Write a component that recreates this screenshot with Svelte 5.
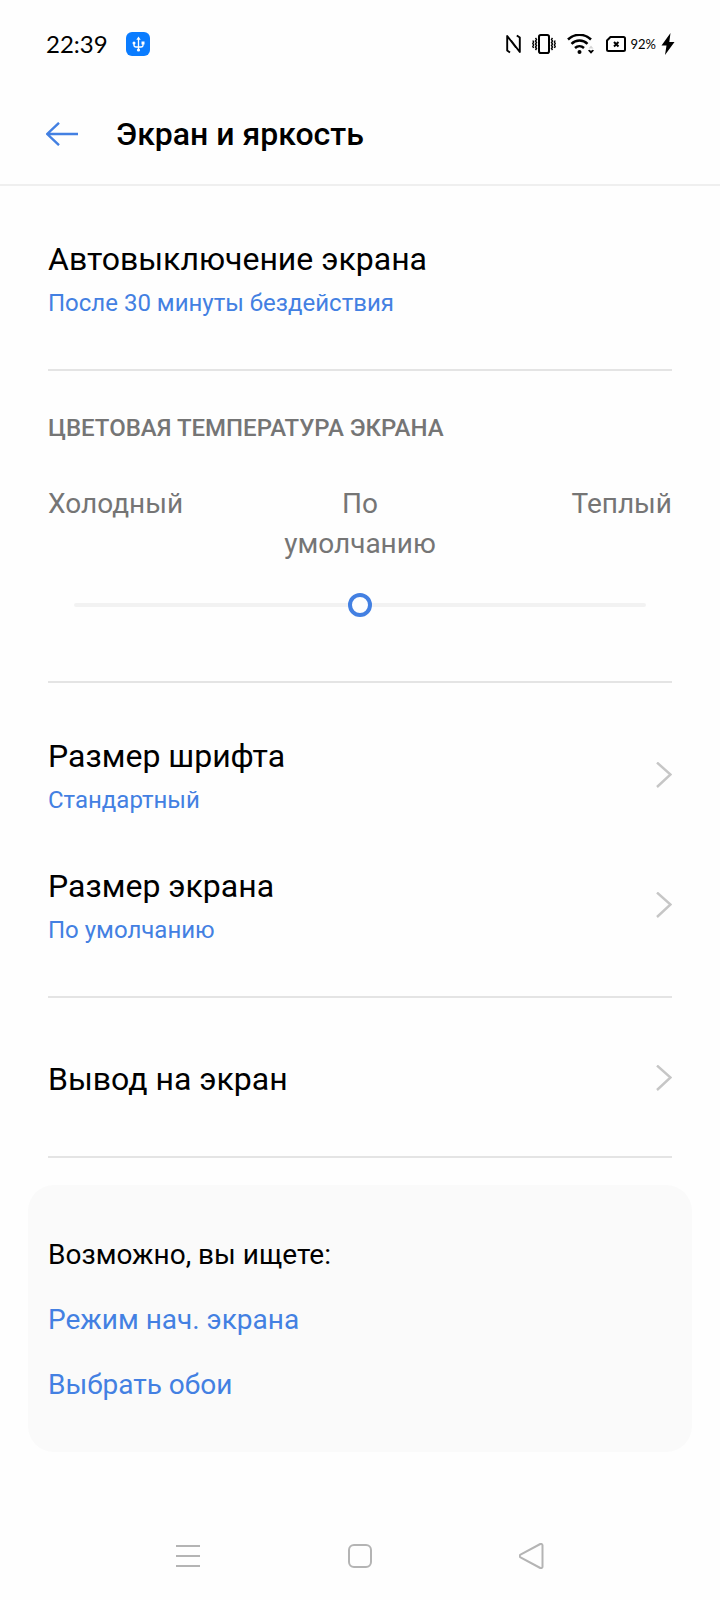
<script>
  let temperature = 50;

  const sizeItems = [
    { title: 'Размер шрифта', value: 'Стандартный' },
    { title: 'Размер экрана', value: 'По умолчанию' }
  ];

  const suggestions = ['Режим нач. экрана', 'Выбрать обои'];
</script>

{#snippet chevron()}
  <svg class="row__chevron" viewBox="0 0 16 28" aria-hidden="true">
    <path d="M1 .5 14.500 12.500 1 25" fill="none" stroke="#c6c6c6" stroke-width="2.400" />
  </svg>
{/snippet}

<div class="screen">
  <div class="status">
    <span class="status__time">22:39</span>
    <svg class="status__usb" viewBox="0 0 24 24" aria-hidden="true">
      <rect width="24" height="24" rx="6" fill="#0a7cff" />
      <g fill="none" stroke="#fff" stroke-width="1.3">
        <path d="M12.5 7v11M8 11v2.2c0 1.2.8 1.8 2 1.8h5c1.200 0 2-.6 2-1.800V11" />
      </g>
      <g fill="#fff">
        <path d="m12.500 4.500 2.200 3.200h-4.400z" />
        <circle cx="8" cy="11" r="1.500" />
        <rect x="15.500" y="9.500" width="3" height="3" />
        <circle cx="12.500" cy="18" r="1.600" />
      </g>
    </svg>

    <div class="status__icons">
      <svg width="15" height="20" viewBox="0 0 15 20" aria-hidden="true">
        <path d="M4 18.500 1.200 16.500V2L10 13.500M10.800 1.500 13.800 3.500V18L5 6.500" fill="none" stroke="#000" stroke-width="1.900" stroke-linejoin="round" />
      </svg>
      <svg width="24" height="20" viewBox="0 0 24 20" aria-hidden="true">
        <rect x="7" y="1" width="10" height="18" rx="1.800" fill="none" stroke="#000" stroke-width="2" />
        <path d="M3.500 4 4.500 5.500 3.500 7 4.500 8.500 3.500 10 4.500 11.500 3.500 13 4.500 14.500 3.500 16M.8 6.500 1.600 8 .8 9.500 1.600 11 .8 12.500 1.600 14M20.500 4 19.500 5.500 20.500 7 19.500 8.500 20.500 10 19.500 11.500 20.500 13 19.500 14.500 20.500 16M23.200 6.500 22.400 8 23.200 9.500 22.400 11 23.200 12.500 22.400 14" fill="none" stroke="#000" stroke-width="1.400" />
      </svg>
      <svg width="28" height="20" viewBox="0 0 28 20" aria-hidden="true">
        <g fill="none" stroke="#000" stroke-width="2.500">
          <path d="M1 5.500a16.500 16.500 0 0 1 23 0" />
          <path d="M4.500 9.800a11.500 11.500 0 0 1 16 0" />
          <path d="M8 14a6.800 6.800 0 0 1 9 0" />
        </g>
        <circle cx="12.500" cy="18" r="2" />
        <path d="m21.500 14.500 2.500-3 2.500 3z" fill="#d5d5d5" />
        <path d="m21 16.500 3 3.300 3-3.300-1.200-.7-1.800 1-1.800-1z" />
      </svg>
      <svg width="20" height="16" viewBox="0 0 20 16" aria-hidden="true">
        <path d="M4.500 1h13a1.500 1.500 0 0 1 1.500 1.500v11a1.500 1.500 0 0 1-1.500 1.500h-15A1.500 1.500 0 0 1 1 13.500V4.500z" fill="none" stroke="#000" stroke-width="2" stroke-linejoin="round" />
        <path d="m8 6 4.500 4.500m0-4.500L8 10.500" stroke="#000" stroke-width="2" />
      </svg>
      <span class="status__battery">92%</span>
      <svg width="14" height="22" viewBox="0 0 14 22" aria-hidden="true">
        <path d="M9.500 0 .5 12.500h5L4 22l9.500-13H8.300z" />
      </svg>
    </div>
  </div>

  <header class="header">
    <button type="button" class="header__back" aria-label="Назад">
      <svg width="32" height="24" viewBox="0 0 32 24" aria-hidden="true">
        <path d="M13 .8 1.200 12 13 23.200M1.200 12H32" fill="none" stroke="#4380e2" stroke-width="2.400" />
      </svg>
    </button>
    <h1 class="header__title">Экран и яркость</h1>
  </header>

  <main class="content">
    <section class="group">
      <button type="button" class="row">
        <span class="row__text">
          <span class="row__title">Автовыключение экрана</span>
          <span class="row__value">После 30 минуты бездействия</span>
        </span>
      </button>
    </section>

    <section class="temperature">
      <h2 class="temperature__title" id="temperature-title">ЦВЕТОВАЯ ТЕМПЕРАТУРА ЭКРАНА</h2>
      <div class="temperature__labels">
        <span>Холодный</span>
        <span>По умолчанию</span>
        <span>Теплый</span>
      </div>
      <input type="range" class="temperature__slider" min="0" max="100" aria-labelledby="temperature-title" bind:value={temperature} />
    </section>

    <section class="group">
      {#each sizeItems as item}
        <button type="button" class="row">
          <span class="row__text">
            <span class="row__title">{item.title}</span>
            <span class="row__value">{item.value}</span>
          </span>
          {@render chevron()}
        </button>
      {/each}
    </section>

    <section class="group">
      <button type="button" class="row">
        <span class="row__text">
          <span class="row__title">Вывод на экран</span>
        </span>
        {@render chevron()}
      </button>
    </section>
  </main>

  <aside class="suggest">
    <p class="suggest__title">Возможно, вы ищете:</p>
    {#each suggestions as suggestion}
      <a href="#top" class="suggest__link">{suggestion}</a>
    {/each}
  </aside>

  <nav class="nav">
    <button type="button" class="nav__button" aria-label="Недавние">
      <svg width="26" height="26" viewBox="0 0 26 26" aria-hidden="true">
        <path d="M1 3h24M1 13h24M1 23h24" />
      </svg>
    </button>
    <button type="button" class="nav__button" aria-label="Домой">
      <svg width="26" height="26" viewBox="0 0 26 26" aria-hidden="true">
        <rect x="2" y="2" width="22" height="22" rx="5" />
      </svg>
    </button>
    <button type="button" class="nav__button" aria-label="Назад">
      <svg width="26" height="26" viewBox="0 0 26 26" aria-hidden="true">
        <path d="M21.300 1 1.500 11.600a1.600 1.600 0 0 0 0 2.800L21.300 25a1.500 1.500 0 0 0 2.200-1.300V2.300A1.500 1.500 0 0 0 21.300 1z" />
      </svg>
    </button>
  </nav>
</div>

<style>
  :global(body) {
    margin: 0;
    background: #fefefe;
  }

  .screen {
    display: flex;
    flex-direction: column;
    min-height: 100vh;
    font-family: Roboto, 'Noto Sans', sans-serif;
    color: #000;
  }

  button {
    padding: 0;
    border: none;
    background: none;
    color: inherit;
    font: inherit;
    text-align: left;
  }

  svg {
    display: block;
    flex-shrink: 0;
  }

  .status {
    display: flex;
    align-items: center;
    height: 24px;
    padding: 32px 45px 28px 46px;
    font-family: Lato, sans-serif;
  }

  .status__time {
    font-size: 24px;
    line-height: 24px;
  }

  .status__usb {
    width: 24px;
    height: 24px;
    margin-left: 18px;
  }

  .status__icons {
    display: flex;
    align-items: center;
    gap: 11px;
    margin-left: auto;
  }

  .status__battery {
    margin: 0 -6px;
    font-size: 13px;
    line-height: 16px;
  }

  .header {
    display: flex;
    align-items: center;
    gap: 38px;
    height: 100px;
    padding: 0 46px;
    border-bottom: 2px solid #efefef;
  }

  .header__title {
    margin: 0;
    font-size: 32px;
    font-weight: 500;
    line-height: 40px;
  }

  .content {
    padding: 0 48px;
  }

  .group {
    padding: 28px 0 25px;
    border-bottom: 2px solid #e4e4e4;
  }

  .row {
    display: flex;
    align-items: center;
    justify-content: space-between;
    width: 100%;
    min-height: 105px;
    padding: 25px 0;
  }

  .row__text {
    display: flex;
    flex-direction: column;
    gap: 8px;
  }

  .row__title {
    font-size: 32px;
    line-height: 40px;
  }

  .row__value {
    color: #4380e2;
    font-size: 24px;
    line-height: 32px;
  }

  .row__chevron {
    width: 16px;
    height: 28px;
  }

  .temperature {
    padding: 41px 0 64px;
    border-bottom: 2px solid #e4e4e4;
    color: #757575;
  }

  .temperature__title {
    margin: 0 0 40px;
    font-size: 24px;
    font-weight: 500;
    line-height: 32px;
  }

  .temperature__labels {
    display: grid;
    grid-template-columns: repeat(3, 1fr);
    gap: 48px;
    font-size: 28px;
    line-height: 40px;
    text-align: center;
  }

  .temperature__labels span:first-child {
    text-align: left;
  }

  .temperature__labels span:last-child {
    text-align: right;
  }

  .temperature__slider {
    display: block;
    width: calc(100% - 52px);
    height: 24px;
    margin: 29px 26px 0;
    appearance: none;
    background: none;
  }

  .temperature__slider::-webkit-slider-runnable-track {
    height: 4px;
    border-radius: 2px;
    background: #f2f2f2;
  }

  .temperature__slider::-webkit-slider-thumb {
    box-sizing: border-box;
    width: 24px;
    height: 24px;
    margin-top: -10px;
    border: 4px solid #4380e2;
    border-radius: 50%;
    appearance: none;
    background: #fefefe;
  }

  .suggest {
    display: flex;
    flex-direction: column;
    align-items: flex-start;
    gap: 25px;
    margin: 27px 28px;
    padding: 50px 20px 47px;
    border-radius: 26px;
    background: #fafafa;
    font-size: 28px;
    line-height: 40px;
  }

  .suggest__title {
    margin: 0;
  }

  .suggest__link {
    color: #4380e2;
    text-decoration: none;
  }

  .nav {
    display: flex;
    align-items: center;
    justify-content: center;
    gap: 146px;
    height: 88px;
    margin-top: auto;
  }

  .nav__button svg {
    fill: none;
    stroke: #b4b4b4;
    stroke-width: 2;
  }
</style>
